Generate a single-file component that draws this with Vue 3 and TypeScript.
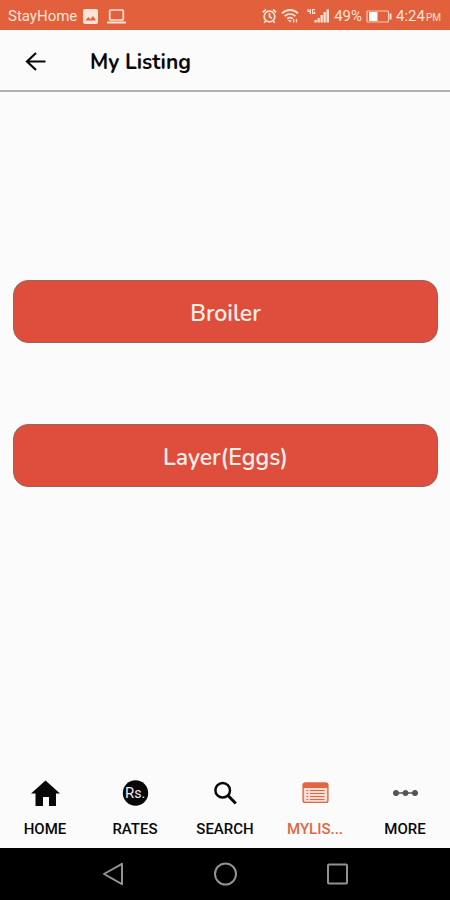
<script setup lang="ts">
import { ref } from 'vue'

interface Tab {
  id: string
  label: string
}

const tabs: Tab[] = [
  { id: 'home', label: 'HOME' },
  { id: 'rates', label: 'RATES' },
  { id: 'search', label: 'SEARCH' },
  { id: 'listing', label: 'MYLIS...' },
  { id: 'more', label: 'MORE' },
]

const categories: string[] = ['Broiler', 'Layer(Eggs)']
const active = ref('listing')
</script>

<template>
  <div class="screen">
    <div class="status">
      <div class="group">
        <span class="carrier">StayHome</span>
        <svg class="picture" width="15" height="15" viewBox="0 0 15 15" aria-hidden="true">
          <rect width="15" height="15" rx="2" fill="currentColor" />
          <path d="M2.5 11.5 5.3 8l2 2.3L10 7l3 4.5z" fill="#e2603c" />
        </svg>
        <svg width="19" height="15" viewBox="0 0 19 15" fill="none" stroke="currentColor" aria-hidden="true">
          <rect x="2.7" y="1" width="13.6" height="10" rx="1" stroke-width="1.7" />
          <path d="M0 13.5h19" stroke-width="2" />
        </svg>
      </div>
      <div class="group right">
        <svg width="15" height="16" viewBox="0 0 15 16" fill="none" stroke="currentColor" stroke-width="1.7" aria-hidden="true">
          <circle cx="7.5" cy="8.5" r="5.3" />
          <path d="M7.5 5.2v3.5l2.4 1.5M.8 4.3 4 1.5M14.2 4.3 11 1.5M3.7 13l-1.5 1.8M11.3 13l1.5 1.8" />
        </svg>
        <svg width="18" height="16" viewBox="0 0 18 16" fill="none" stroke="currentColor" stroke-width="1.8" aria-hidden="true">
          <path d="M1 5.3c4.5-4.4 11.5-4.4 16 0M3.6 8.2c3.2-2.9 7.6-2.9 10.8 0M6.2 10.8c1.8-1.5 3.8-1.5 5.6 0" />
          <path d="m6.8 12 2.2 2.6 1.8-2.1z" fill="currentColor" stroke="none" />
          <path d="M12.7 11v3.5M15.5 11v3.5" stroke-width="1.3" />
        </svg>
        <svg class="signal" width="23" height="16" viewBox="0 0 23 16" fill="currentColor" aria-hidden="true">
          <path d="M.5 1h1.2v2h1V1H4v5H2.700V4H.5zM5 1h3v1H6.200v3H7V3.500h1.300V6H5z" />
          <path d="M7.5 12h2.3v2.5H7.5zM10.500 10h2.300v4.500h-2.300zM13.500 7h2.300v7.500h-2.300zM16.500 4h2.300v10.500h-2.300zM19.500 1.500H22v13h-2.500z" />
        </svg>
        <span>49%</span>
        <svg class="battery" width="26" height="13" viewBox="0 0 26 13" aria-hidden="true">
          <rect x="1" y="1" width="21.5" height="11" rx="1" fill="none" stroke="currentColor" stroke-width="1.2" opacity=".8" />
          <rect x="3" y="2" width="8.5" height="9" fill="#fff" />
          <path d="M24.5 3.5v6" stroke="currentColor" stroke-width="2" />
        </svg>
        <span class="clock">4:24<small>PM</small></span>
      </div>
    </div>

    <header class="header">
      <button class="back" type="button" aria-label="Back">
        <svg width="22" height="20" viewBox="0 0 22 20" fill="none" stroke="currentColor" stroke-width="2.2" aria-hidden="true">
          <path d="M20.5 9.500H2.500M11 1 2 9.500l9 8.500" />
        </svg>
      </button>
      <h1>My Listing</h1>
    </header>

    <main class="content">
      <button v-for="name in categories" :key="name" class="category" type="button">{{ name }}</button>
    </main>

    <nav class="tabs">
      <button
        v-for="tab in tabs"
        :key="tab.id"
        type="button"
        class="tab"
        :class="{ active: tab.id === active }"
        @click="active = tab.id"
      >
        <svg width="30" height="30" viewBox="0 0 30 30" fill="none" aria-hidden="true">
          <path v-if="tab.id === 'home'" d="M15.500 2.500 30 15.500h-4V28h-7v-9h-6v9H5.500V15.500H1z" fill="currentColor" />
          <template v-else-if="tab.id === 'rates'">
            <circle cx="15.5" cy="15" r="12.7" fill="currentColor" />
            <text x="5" y="20" class="rupee">R<tspan class="small">s.</tspan></text>
          </template>
          <g v-else-if="tab.id === 'search'" stroke="currentColor">
            <circle cx="12.7" cy="12.3" r="7.3" stroke-width="2.5" />
            <path d="m18 17.500 7.800 8" stroke-width="3" />
          </g>
          <g v-else-if="tab.id === 'listing'" stroke="currentColor">
            <rect x="3.1" y="5.1" width="24.8" height="19.3" rx="2" fill="#f9ddd2" stroke-width="1.4" />
            <path d="M3 10V6.500q0-2 2-2h21q2 0 2 2V10z" fill="currentColor" stroke="none" />
            <path d="M10 12.500h14.500M10 15.500h14.500M10 18.500h14.500M10 21.500h14.500M6.500 12.500h1.700M6.500 15.500h1.700M6.500 18.500h1.700M6.500 21.500h1.700" stroke-width="1.2" />
          </g>
          <g v-else fill="#555" stroke="#555">
            <path d="M6 15h19" stroke-width="1.5" />
            <circle cx="6" cy="15" r="2.6" />
            <circle cx="15.5" cy="15" r="2.6" />
            <circle cx="25" cy="15" r="2.6" />
          </g>
        </svg>
        <span>{{ tab.label }}</span>
      </button>
    </nav>

    <div class="system">
      <button type="button" aria-label="System back">
        <svg width="24" height="24" viewBox="0 0 24 24" aria-hidden="true"><path d="M21 1.8v20.4L3 12z" /></svg>
      </button>
      <button type="button" aria-label="System home">
        <svg width="24" height="24" viewBox="0 0 24 24" aria-hidden="true"><circle cx="12.5" cy="12" r="10.5" /></svg>
      </button>
      <button type="button" aria-label="Recent apps">
        <svg width="24" height="24" viewBox="0 0 24 24" aria-hidden="true"><rect x="3" y="2.5" width="19" height="19" rx="1" /></svg>
      </button>
    </div>
  </div>
</template>

<style>
body {
  background: #fbfbfb;
}
</style>

<style scoped>
.screen {
  display: flex;
  flex-direction: column;
  min-height: 100vh;
  background: #fbfbfb;
  color: #080808;
  font-family: Roboto, "Liberation Sans", sans-serif;
}

button {
  border: 0;
  padding: 0;
  background: none;
  color: inherit;
  font: inherit;
  cursor: pointer;
}

svg {
  display: block;
  flex: none;
}

.status {
  display: flex;
  align-items: center;
  justify-content: space-between;
  height: 30px;
  padding: 2px 9px 0 8px;
  box-sizing: border-box;
  background: #e2603c;
  color: #ffe3d6;
  font-size: 15px;
}

.group {
  display: flex;
  align-items: center;
  gap: 9px;
}

.picture {
  margin-left: -3px;
}

.right {
  gap: 4px;
}

.signal {
  margin-left: 4px;
}

.clock small {
  margin-left: 1px;
  font-size: 10px;
}

.header {
  display: flex;
  align-items: center;
  gap: 43px;
  height: 62px;
  padding: 3px 0 0 25px;
  box-sizing: border-box;
  border-bottom: 2px solid #b2b2b2;
}

h1 {
  margin: 0;
  font: 700 21px/28px Nunito, "Open Sans", sans-serif;
}

.content {
  flex: 1;
  display: flex;
  flex-direction: column;
  gap: 81px;
  padding: 188px 12px 0 13px;
}

.category {
  height: 63px;
  padding-top: 4px;
  border: 1px solid #8a6a62;
  border-radius: 15px;
  background: #df4e3c;
  color: #fff0ea;
  font: 600 23px/32px Nunito, "Noto Sans", sans-serif;
}

.tabs {
  display: grid;
  grid-template-columns: repeat(5, 1fr);
  padding: 8px 0 10px;
}

.tab {
  display: flex;
  flex-direction: column;
  align-items: center;
  gap: 12px;
  font-size: 15px;
  font-weight: 500;
  line-height: 18px;
}

.active {
  color: #df6744;
}

.rupee {
  fill: #eee;
  font: 400 15px Roboto, sans-serif;
}

.small {
  font-size: 14px;
}

.system {
  display: flex;
  align-items: center;
  justify-content: center;
  gap: 88px;
  height: 52px;
  background: #000;
}

.system svg {
  fill: none;
  stroke: #929292;
  stroke-width: 2;
  stroke-linejoin: round;
}
</style>
